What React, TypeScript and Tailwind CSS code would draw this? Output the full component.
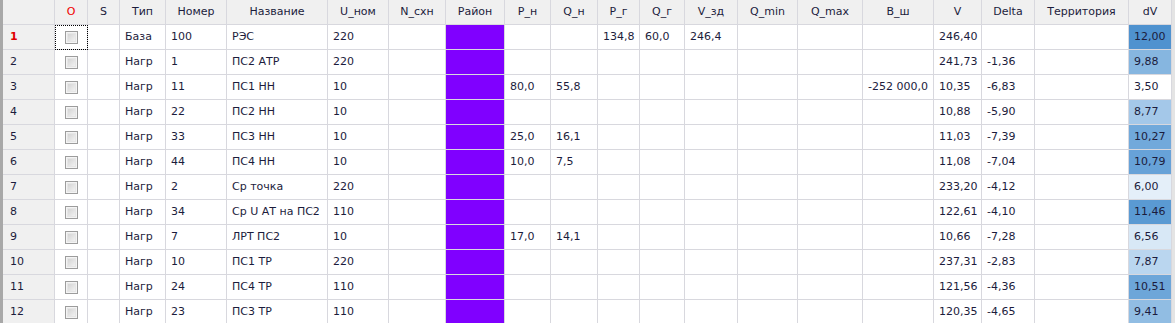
const columns = [
  'O', 'S', 'Тип', 'Номер', 'Название', 'U_ном', 'N_схн', 'Район', 'P_н', 'Q_н', 'P_г', 'Q_г',
  'V_зд', 'Q_min', 'Q_max', 'B_ш', 'V', 'Delta', 'Территория', 'dV',
];

type Row = {
  type: string;
  num: string;
  name: string;
  unom: string;
  pn?: string;
  qn?: string;
  pg?: string;
  qg?: string;
  vzd?: string;
  bsh?: string;
  v: string;
  delta?: string;
  dv: string;
  dvBg: string;
};

const rows: Row[] = [
  { type: 'База', num: '100', name: 'РЭС', unom: '220', pg: '134,8', qg: '60,0', vzd: '246,4', v: '246,40', dv: '12,00', dvBg: 'bg-[#4f92cf]' },
  { type: 'Нагр', num: '1', name: 'ПС2 АТР', unom: '220', v: '241,73', delta: '-1,36', dv: '9,88', dvBg: 'bg-[#86b6e0]' },
  { type: 'Нагр', num: '11', name: 'ПС1 НН', unom: '10', pn: '80,0', qn: '55,8', bsh: '-252 000,0', v: '10,35', delta: '-6,83', dv: '3,50', dvBg: 'bg-white' },
  { type: 'Нагр', num: '22', name: 'ПС2 НН', unom: '10', v: '10,88', delta: '-5,90', dv: '8,77', dvBg: 'bg-[#a4c8e9]' },
  { type: 'Нагр', num: '33', name: 'ПС3 НН', unom: '10', pn: '25,0', qn: '16,1', v: '11,03', delta: '-7,39', dv: '10,27', dvBg: 'bg-[#71a9db]' },
  { type: 'Нагр', num: '44', name: 'ПС4 НН', unom: '10', pn: '10,0', qn: '7,5', v: '11,08', delta: '-7,04', dv: '10,79', dvBg: 'bg-[#67a2d8]' },
  { type: 'Нагр', num: '2', name: 'Ср точка', unom: '220', v: '233,20', delta: '-4,12', dv: '6,00', dvBg: 'bg-[#e4eff9]' },
  { type: 'Нагр', num: '34', name: 'Ср U АТ на ПС2', unom: '110', v: '122,61', delta: '-4,10', dv: '11,46', dvBg: 'bg-[#5a9ad3]' },
  { type: 'Нагр', num: '7', name: 'ЛРТ ПС2', unom: '10', pn: '17,0', qn: '14,1', v: '10,66', delta: '-7,28', dv: '6,56', dvBg: 'bg-[#d8e8f6]' },
  { type: 'Нагр', num: '10', name: 'ПС1 ТР', unom: '220', v: '237,31', delta: '-2,83', dv: '7,87', dvBg: 'bg-[#bad6ef]' },
  { type: 'Нагр', num: '24', name: 'ПС4 ТР', unom: '110', v: '121,56', delta: '-4,36', dv: '10,51', dvBg: 'bg-[#6da6d9]' },
  { type: 'Нагр', num: '23', name: 'ПС3 ТР', unom: '110', v: '120,35', delta: '-4,65', dv: '9,41', dvBg: 'bg-[#91bde3]' },
];

const cell = 'h-[25px] border-r border-b border-[#d8d8de] px-[5px] flex items-center whitespace-nowrap overflow-hidden';

const Checkbox = () => (
  <div className="w-[13px] h-[13px] border border-[#9c9c9c] bg-[#f4f4f4] p-px">
    <div className="w-full h-full bg-gradient-to-br from-[#d4d4d4] to-[#f2f2f2] border border-[#e6e6e6]" />
  </div>
);

const App = () => {
  return (
    <div
      className="flex w-[1175px] h-[323px] overflow-hidden bg-white text-[11px] text-[#1c1c3c]"
      style={{ fontFamily: '"DejaVu Sans", Verdana, sans-serif' }}
    >
      <div className="w-[3px] shrink-0 bg-[#a8a8a8]" />
      <div className="grid grid-cols-[52px_33px_32px_46px_61px_101px_61px_57px_59px_46px_47px_42px_45px_53px_60px_65px_71px_48px_53px_94px_43px] content-start">
        {/* header */}
        <div className="h-[25px] bg-[#f0f0f0] border-r border-b border-[#d8d8de]" />
        {columns.map((c) => (
          <div
            key={c}
            className={`h-[25px] bg-[#f0f0f0] border-r border-b border-[#d8d8de] flex items-center justify-center whitespace-nowrap ${
              c === 'O' ? 'text-[#f00000]' : ''
            }`}
          >
            {c}
          </div>
        ))}

        {rows.map((r, i) => (
          <div key={i} className="contents">
            <div className={`${cell} bg-[#f0f0f0] pl-[7px] ${i === 0 ? 'text-[#e00000] font-bold' : ''}`}>{i + 1}</div>
            <div
              className={`${cell} justify-center ${
                i === 0 ? 'outline-1 outline-dotted outline-black -outline-offset-1' : ''
              }`}
            >
              <Checkbox />
            </div>
            <div className={cell} />
            <div className={cell}>{r.type}</div>
            <div className={cell}>{r.num}</div>
            <div className={cell}>{r.name}</div>
            <div className={cell}>{r.unom}</div>
            <div className={cell} />
            <div className="h-[25px] border-r border-b border-[#d8d8de] bg-[#8000ff]" />
            <div className={cell}>{r.pn}</div>
            <div className={cell}>{r.qn}</div>
            <div className={cell}>{r.pg}</div>
            <div className={cell}>{r.qg}</div>
            <div className={cell}>{r.vzd}</div>
            <div className={cell} />
            <div className={cell} />
            <div className={cell}>{r.bsh}</div>
            <div className={cell}>{r.v}</div>
            <div className={cell}>{r.delta}</div>
            <div className={cell} />
            <div className={`${cell} ${r.dvBg}`}>{r.dv}</div>
          </div>
        ))}
      </div>
      <div className="w-[3px] shrink-0 bg-[#e4e4e4]" />
    </div>
  );
};

export default App;
